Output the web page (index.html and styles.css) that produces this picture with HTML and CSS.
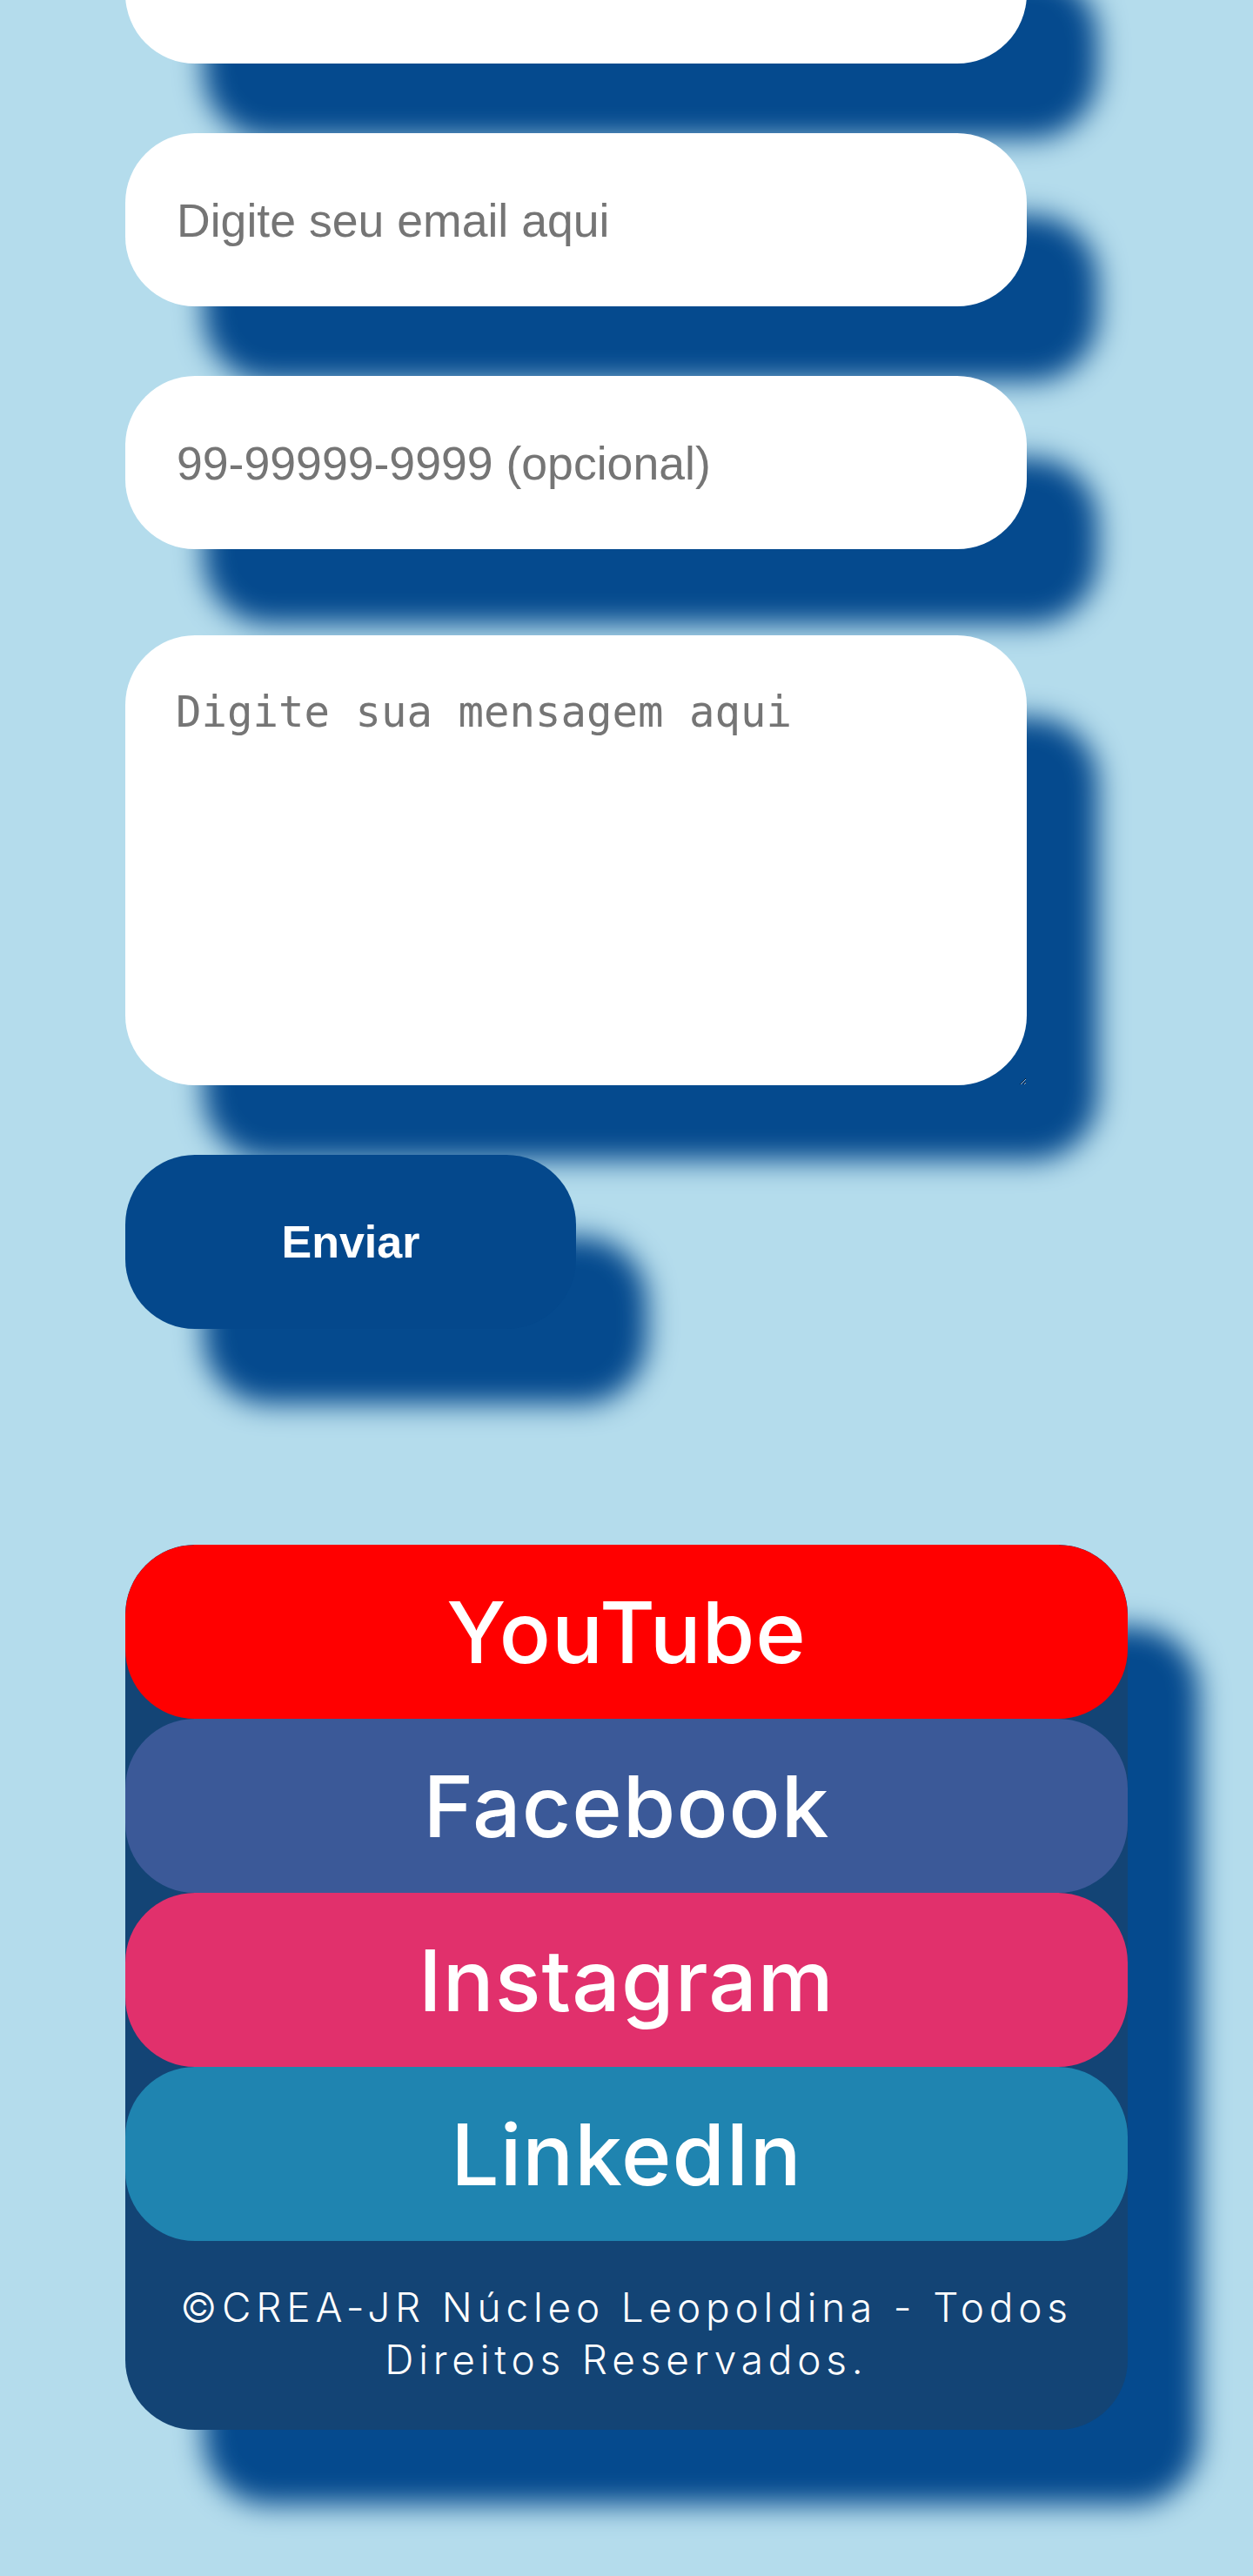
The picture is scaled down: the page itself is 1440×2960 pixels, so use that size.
FILE: index.html
```html
<!DOCTYPE html>
<html lang="pt-BR">
<head>
<meta charset="utf-8">
<title>Contato - CREA-JR Núcleo Leopoldina</title>
<link rel="stylesheet" href="styles.css">
</head>
<body>
<main class="page">
  <form class="contact" action="#" onsubmit="return false;">
    <input class="field field--top" type="text" name="nome" placeholder="Digite seu nome aqui">
    <input class="field" type="email" name="email" placeholder="Digite seu email aqui">
    <input class="field" type="tel" name="telefone" placeholder="99-99999-9999 (opcional)">
    <textarea class="message" name="mensagem" placeholder="Digite sua mensagem aqui"></textarea>
    <button class="send" type="submit">Enviar</button>
  </form>
  <footer class="footer">
    <nav class="social">
      <a class="social-link youtube" href="#">YouTube</a>
      <a class="social-link facebook" href="#">Facebook</a>
      <a class="social-link instagram" href="#">Instagram</a>
      <a class="social-link linkedin" href="#">LinkedIn</a>
    </nav>
    <p class="copy">©CREA-JR Núcleo Leopoldina - Todos Direitos Reservados.</p>
  </footer>
</main>
</body>
</html>
```
FILE: styles.css
```css
* { box-sizing: border-box; }

html, body {
  margin: 0;
  padding: 0;
}

body {
  background: #b4dcec;
  min-height: 2960px;
  overflow: hidden;
}

.page {
  width: 1152px;
  margin: 0 auto;
  padding-bottom: 167px;
}

.contact {
  display: flex;
  flex-direction: column;
  align-items: flex-start;
  gap: 80px;
  margin-top: -126px;
}

.field,
.message,
.send {
  border: none;
  outline: none;
  border-radius: 80px;
  box-shadow: 86px 90px 32px -4px #054a8e;
}

.field {
  width: 1036px;
  height: 199px;
  padding: 0 40px 0 59px;
  background: #fff;
  font-family: "Liberation Sans", Arial, sans-serif;
  font-size: 53.6px;
  color: #222;
}

.field--top {
  padding-bottom: 90px;
}

.field::placeholder,
.message::placeholder {
  color: #757575;
  opacity: 1;
}

.message {
  width: 1036px;
  height: 517px;
  margin-top: 19px;
  padding: 60px 40px 40px 58px;
  background: #fff;
  font-family: "DejaVu Sans Mono", "Liberation Mono", monospace;
  font-size: 49px;
  color: #222;
}

.send {
  width: 518px;
  height: 200px;
  background: #04488c;
  color: #fff;
  font-family: "Liberation Sans", Arial, sans-serif;
  font-weight: 700;
  font-size: 52px;
  cursor: pointer;
}

.footer {
  margin-top: 248px;
  background: #134475;
  border-radius: 80px;
  box-shadow: 86px 90px 32px -4px #054a8e;
  overflow: hidden;
}

.social {
  display: flex;
  flex-direction: column;
}

.social-link {
  display: flex;
  align-items: center;
  justify-content: center;
  height: 200px;
  border-radius: 80px;
  color: #fff;
  text-decoration: none;
  font-family: Inter, "Noto Sans", sans-serif;
  font-weight: 500;
  font-size: 98px;
  letter-spacing: 1px;
}

.youtube { background: #ff0000; }
.facebook { background: #3b5998; }
.instagram { background: #e1306c; }
.linkedin { background: #1f84b0; }

.copy {
  margin: 0;
  padding: 46px 50px 51px;
  text-align: center;
  color: #fff;
  font-family: Inter, "Noto Sans", sans-serif;
  font-weight: 300;
  font-size: 46px;
  line-height: 60px;
  letter-spacing: 5.8px;
}
```
